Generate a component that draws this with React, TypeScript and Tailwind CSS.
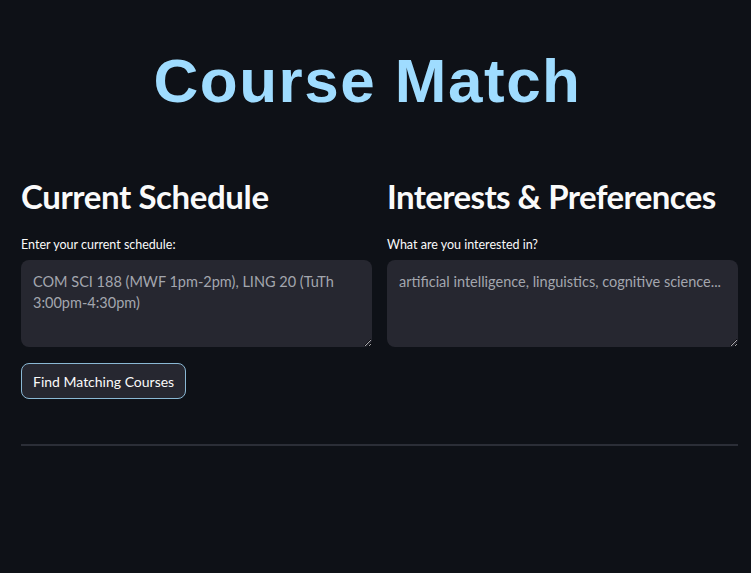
import React, { useState } from "react";

const sans = { fontFamily: 'Lato, "Noto Sans", sans-serif' };

export default function App() {
  const [schedule, setSchedule] = useState("");
  const [interests, setInterests] = useState("");

  return (
    <div className="min-h-screen w-full bg-[#0e1117] text-[#fafafa]" style={sans}>
      <div className="pl-[21px] pr-[13px] pt-[49px]">
        <h1
          className="pr-[24px] text-center text-[62px] font-bold leading-[64px] tracking-[1.5px] text-[#9fdcff]"
          style={{ fontFamily: '"Liberation Sans", Arial, sans-serif' }}
        >
          Course Match
        </h1>

        <div className="mt-[62px] grid grid-cols-2 gap-[15px]">
          <div className="flex flex-col">
            <h2 className="text-[33px] font-bold leading-[42px] tracking-[-0.4px]">Current Schedule</h2>
            <label className="mt-[19px] text-[12.5px] leading-[18px]">Enter your current schedule:</label>
            <textarea
              value={schedule}
              onChange={(e) => setSchedule(e.target.value)}
              placeholder="COM SCI 188 (MWF 1pm-2pm), LING 20 (TuTh 3:00pm-4:30pm)"
              className="mt-[6px] h-[87px] w-full rounded-[8px] bg-[#262730] px-[12px] py-[11px] text-[14.5px] leading-[21px] text-[#fafafa] placeholder:text-[#a3a6ae] outline-none"
            />
            <div className="mt-[16px]">
              <button className="h-[36px] rounded-[8px] border border-[#8ab8d4] bg-[#262730] px-[11px] text-[14px] text-[#fafafa]">
                Find Matching Courses
              </button>
            </div>
          </div>

          <div className="flex flex-col">
            <h2 className="text-[33px] font-bold leading-[42px] tracking-[-0.6px]">Interests &amp; Preferences</h2>
            <label className="mt-[19px] text-[12.5px] leading-[18px]">What are you interested in?</label>
            <textarea
              value={interests}
              onChange={(e) => setInterests(e.target.value)}
              placeholder="artificial intelligence, linguistics, cognitive science..."
              className="mt-[6px] h-[87px] w-full rounded-[8px] bg-[#262730] px-[12px] py-[11px] text-[14.5px] leading-[21px] text-[#fafafa] placeholder:text-[#a3a6ae] outline-none"
            />
          </div>
        </div>

        <hr className="mt-[45px] border-0 border-t-2 border-[#2b2e37]" />
      </div>
    </div>
  );
}
